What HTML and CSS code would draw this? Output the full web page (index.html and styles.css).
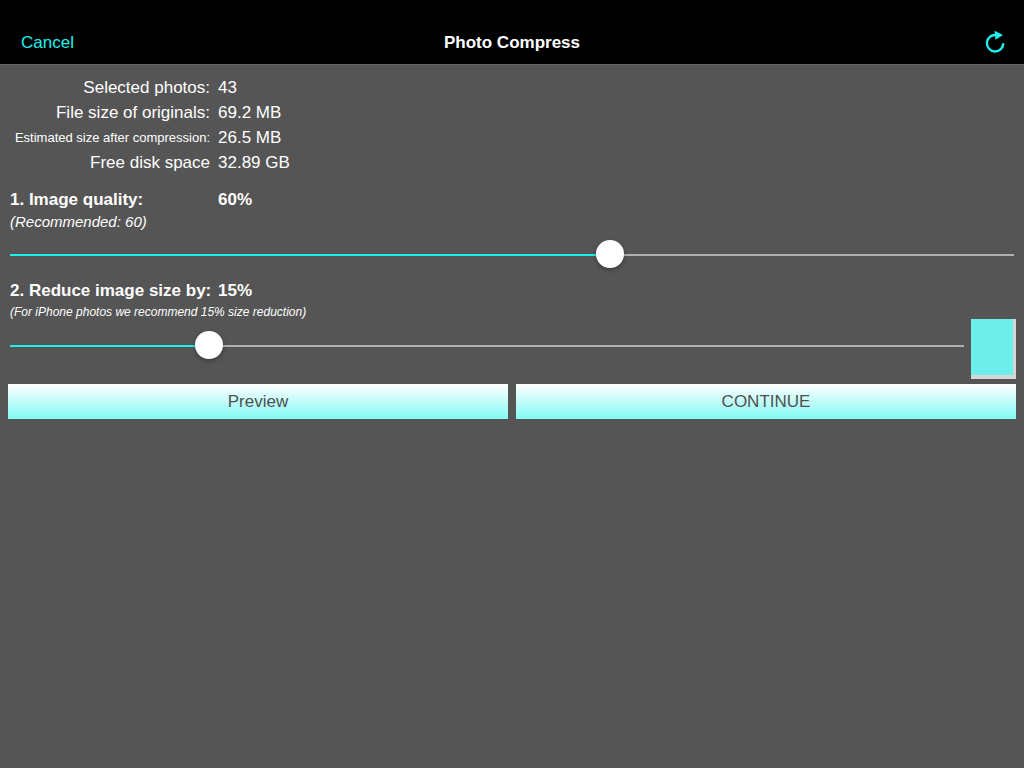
FILE: index.html
```html
<!DOCTYPE html>
<html lang="en">
<head>
    <meta charset="UTF-8">
    <meta name="viewport" content="width=device-width, initial-scale=1.0">
    <title>Photo Compress</title>
    <link rel="stylesheet" href="styles.css">
</head>
<body>
    <header class="navbar">
        <button type="button" class="nav-button">Cancel</button>
        <h1>Photo Compress</h1>
        <button type="button" class="nav-button refresh" aria-label="Reset">
            <svg width="22" height="24" viewBox="0 0 22 24">
                <path d="M12 5.1A8.2 8.2 0 1 0 19.3 13.2" fill="none" stroke="currentColor" stroke-width="2.4"/>
                <path d="M10.5 0.8L19 5L11.5 9.8Z" fill="currentColor"/>
            </svg>
        </button>
    </header>

    <main class="content">
        <dl class="stats">
            <dt>Selected photos:</dt>
            <dd>43</dd>
            <dt>File size of originals:</dt>
            <dd>69.2 MB</dd>
            <dt class="small">Estimated size after compression:</dt>
            <dd>26.5 MB</dd>
            <dt>Free disk space</dt>
            <dd>32.89 GB</dd>
        </dl>

        <section class="setting">
            <div class="setting-title">
                <label for="quality">1. Image quality:</label>
                <output id="qualityValue" for="quality">60%</output>
            </div>
            <p class="note">(Recommended: 60)</p>
            <div class="slider-row">
                <input type="range" id="quality" min="0" max="100" value="60" style="--fill: 60%">
            </div>
        </section>

        <section class="setting">
            <div class="setting-title">
                <label for="reduce">2. Reduce image size by:</label>
                <output id="reduceValue" for="reduce">15%</output>
            </div>
            <p class="note note-small">(For iPhone photos we recommend 15% size reduction)</p>
            <div class="slider-row with-swatch">
                <input type="range" id="reduce" min="0" max="75" value="15" style="--fill: 20%">
                <div class="swatch"></div>
            </div>
        </section>

        <div class="actions">
            <button type="button">Preview</button>
            <button type="button">CONTINUE</button>
        </div>
    </main>

    <script>
        document.querySelectorAll('input[type="range"]').forEach(slider => {
            slider.addEventListener('input', function() {
                this.style.setProperty('--fill', (this.value / this.max * 100) + '%');
                document.getElementById(this.id + 'Value').value = this.value + '%';
            });
        });
    </script>
</body>
</html>
```

FILE: styles.css
```css
:root {
    --accent-color: #1ff0ee;
    --background-color: #555;
    --track-color: #b0b0b0;
}

* {
    margin: 0;
    padding: 0;
    box-sizing: border-box;
}

body {
    font-family: "Liberation Sans", Arial, sans-serif;
    font-size: 17px;
    line-height: 25px;
    background-color: var(--background-color);
    color: #fff;
}

button {
    font: inherit;
    border: none;
    cursor: pointer;
}

.navbar {
    display: grid;
    grid-template-columns: 1fr auto 1fr;
    align-items: center;
    padding: 20px 18px 0 18px;
    height: 64px;
    background-color: #000;
}

.navbar h1 {
    font-size: 17px;
    font-weight: bold;
}

.nav-button {
    justify-self: start;
    padding: 0 3px;
    background: none;
    color: var(--accent-color);
}

.refresh {
    justify-self: end;
    display: flex;
    padding: 0;
}

.content {
    padding: 10px 8px;
    border-top: 1px solid #646464;
}

.stats {
    display: grid;
    grid-template-columns: 202px 1fr;
    column-gap: 8px;
}

.stats dt {
    text-align: right;
    white-space: nowrap;
}

.stats .small {
    font-size: 13px;
}

.setting {
    padding: 0 2px;
}

.stats + .setting {
    margin-top: 12px;
}

.setting-title {
    display: grid;
    grid-template-columns: 200px 1fr;
    column-gap: 8px;
    font-weight: bold;
    white-space: nowrap;
}

.note {
    font-size: 15px;
    line-height: 20px;
    font-style: italic;
}

.note-small {
    font-size: 12px;
    line-height: 18px;
}

.slider-row {
    display: flex;
    align-items: center;
    height: 46px;
}

.with-swatch {
    gap: 7px;
    height: 60px;
    margin: -2px -2px 0 0;
}

input[type="range"] {
    flex: 1;
    min-width: 0;
    height: 28px;
    appearance: none;
    background: none;
    cursor: pointer;
}

.with-swatch input[type="range"] {
    margin-bottom: 6px;
}

input[type="range"]::-webkit-slider-runnable-track {
    height: 2px;
    background: linear-gradient(to right, var(--accent-color) var(--fill), var(--track-color) var(--fill));
}

input[type="range"]::-webkit-slider-thumb {
    appearance: none;
    width: 28px;
    height: 28px;
    margin-top: -14px;
    border-radius: 50%;
    background-color: #fff;
    box-shadow: 0 2px 5px rgba(0, 0, 0, 0.3);
}

.swatch {
    width: 45px;
    height: 60px;
    background-color: #6eeeeb;
    border-right: 3px solid #d6d6d6;
    border-bottom: 4px solid #d6d6d6;
}

.actions {
    display: flex;
    gap: 8px;
    margin-top: 5px;
}

.actions button {
    flex: 1;
    height: 35px;
    color: #505050;
    background: linear-gradient(#fff, #84faf4);
}
```
